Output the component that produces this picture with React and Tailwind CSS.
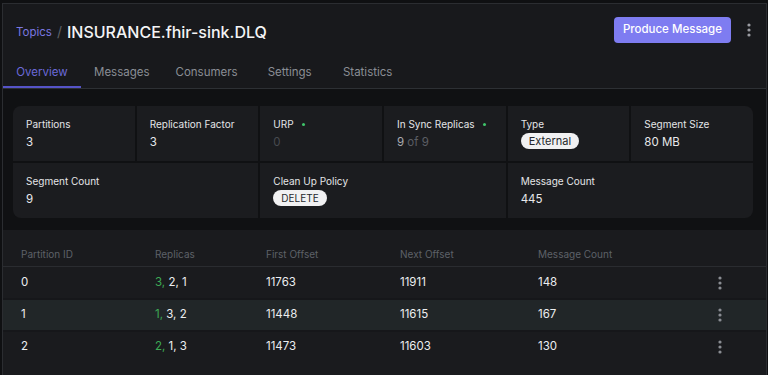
import { useState } from "react";

const stats1 = [
  { label: "Partitions", value: "3" },
  { label: "Replication Factor", value: "3" },
  { label: "URP", value: "0", dot: true, muted: true },
  { label: "In Sync Replicas", value: "9", of: "of 9", dot: true },
  { label: "Type", badge: "External" },
  { label: "Segment Size", value: "80 MB" },
];

const stats2 = [
  { label: "Segment Count", value: "9" },
  { label: "Clean Up Policy", badge: "DELETE", small: true },
  { label: "Message Count", value: "445" },
];

const rows = [
  { id: "0", leader: "3", rest: "2, 1", first: "11763", next: "11911", count: "148" },
  { id: "1", leader: "1", rest: "3, 2", first: "11448", next: "11615", count: "167" },
  { id: "2", leader: "2", rest: "1, 3", first: "11473", next: "11603", count: "130" },
];

const tabs = ["Overview", "Messages", "Consumers", "Settings", "Statistics"];

function Dots({ className }) {
  return (
    <svg width="4" height="14" viewBox="0 0 4 14" className={className}>
      <circle cx="2" cy="2" r="1.6" fill="currentColor" />
      <circle cx="2" cy="7" r="1.6" fill="currentColor" />
      <circle cx="2" cy="12" r="1.6" fill="currentColor" />
    </svg>
  );
}

function StatCell({ s }) {
  return (
    <div className="bg-[#1b1c1f] px-[13px] h-[55px] flex flex-col justify-center">
      <div className="flex items-center gap-[8px] text-[10px] text-[#e4e5e7] leading-[13px]">
        {s.label}
        {s.dot && <span className="w-[3px] h-[3px] rounded-full bg-[#3fc46a]" />}
      </div>
      {s.badge ? (
        <div className="flex mt-[2px]">
          <span
            className={`bg-[#f1f1f2] text-[#26282c] leading-[16px] px-[8px] rounded-full ${
              s.small ? "text-[10px]" : "text-[11px]"
            }`}
          >
            {s.badge}
          </span>
        </div>
      ) : (
        <div className={`text-[11.5px] leading-[16px] mt-[3px] ${s.muted ? "text-[#474a4f]" : "text-[#e8e9eb]"}`}>
          {s.of ? (
            <>
              <span className="text-[#a9abb0]">{s.value}</span>{" "}
              <span className="text-[#5b5e64]">{s.of}</span>
            </>
          ) : (
            s.value
          )}
        </div>
      )}
    </div>
  );
}

export default function App() {
  const [active, setActive] = useState("Overview");

  return (
    <div
      className="w-[768px] h-[375px] overflow-hidden bg-[#0f1012] pl-[2px] pt-[3px] pr-[1px]"
      style={{ fontFamily: "Inter, 'Noto Sans', sans-serif" }}
    >
      <div className="h-full border-l border-t border-r border-[#2b2d31] flex flex-col bg-[#1a1b1e]">
        {/* header */}
        <div className="bg-[#18191c] border-b border-[#2d3034]">
          <div className="flex items-center justify-between pl-[13px] pr-[15px] pt-[13px]">
            <div className="flex items-center gap-[5px] pt-[4px] leading-[22px]">
              <span className="text-[11.5px] text-[#7a77e0]">Topics</span>
              <span className="text-[14px] text-[#5e6167]">/</span>
              <span className="text-[16px] text-[#f4f4f5] font-medium">
                INSURANCE.fhir-sink.DLQ
              </span>
            </div>
            <div className="flex items-center gap-[16px]">
              <button className="h-[26px] px-[9px] rounded-[4px] bg-[#7e7cf1] text-white text-[11.5px] font-medium">
                Produce Message
              </button>
              <Dots className="text-[#9a9ca2]" />
            </div>
          </div>
          <div className="flex mt-[13px]">
            {tabs.map((t) => (
              <button
                key={t}
                onClick={() => setActive(t)}
                className={`px-[13px] pt-[4px] min-w-[78px] h-[32px] text-[11.5px] border-b-2 ${
                  active === t
                    ? "text-[#6b69d8] border-[#5654c8]"
                    : "text-[#8a8e95] border-transparent"
                }`}
              >
                {t}
              </button>
            ))}
          </div>
        </div>

        {/* stats */}
        <div className="bg-[#101113] pl-[10px] pr-[13px] pt-[17px] pb-[12px]">
          <div className="rounded-[8px] overflow-hidden flex flex-col gap-[2px]">
            <div className="grid grid-cols-6 gap-[2px]">
              {stats1.map((s) => (
                <StatCell key={s.label} s={s} />
              ))}
            </div>
            <div className="grid grid-cols-3 gap-[2px]">
              {stats2.map((s) => (
                <StatCell key={s.label} s={s} />
              ))}
            </div>
          </div>
        </div>

        {/* table */}
        <div className="flex-1 bg-[#1a1b1e]">
          <div className="grid grid-cols-[134px_111px_134px_138px_1fr_48px] pl-[18px] h-[37px] items-end pb-[4px] border-b border-[#2a2c30] text-[10px] text-[#5d6168]">
            <div>Partition ID</div>
            <div>Replicas</div>
            <div>First Offset</div>
            <div>Next Offset</div>
            <div>Message Count</div>
            <div />
          </div>
          {rows.map((r, i) => (
            <div
              key={r.id}
              className={`grid grid-cols-[134px_111px_134px_138px_1fr_48px] pl-[18px] h-[31px] items-center text-[11.5px] text-[#eceef0] ${
                i > 0 ? "border-t-2 border-[#16171a] h-[32px]" : ""
              } ${i === 1 ? "bg-[#212628]" : ""}`}
            >
              <div>{r.id}</div>
              <div>
                <span className="text-[#3daa55]">{r.leader},</span> {r.rest}
              </div>
              <div>{r.first}</div>
              <div>{r.next}</div>
              <div>{r.count}</div>
              <div className="flex">
                <Dots className="text-[#8a8d93]" />
              </div>
            </div>
          ))}
        </div>
      </div>
    </div>
  );
}
